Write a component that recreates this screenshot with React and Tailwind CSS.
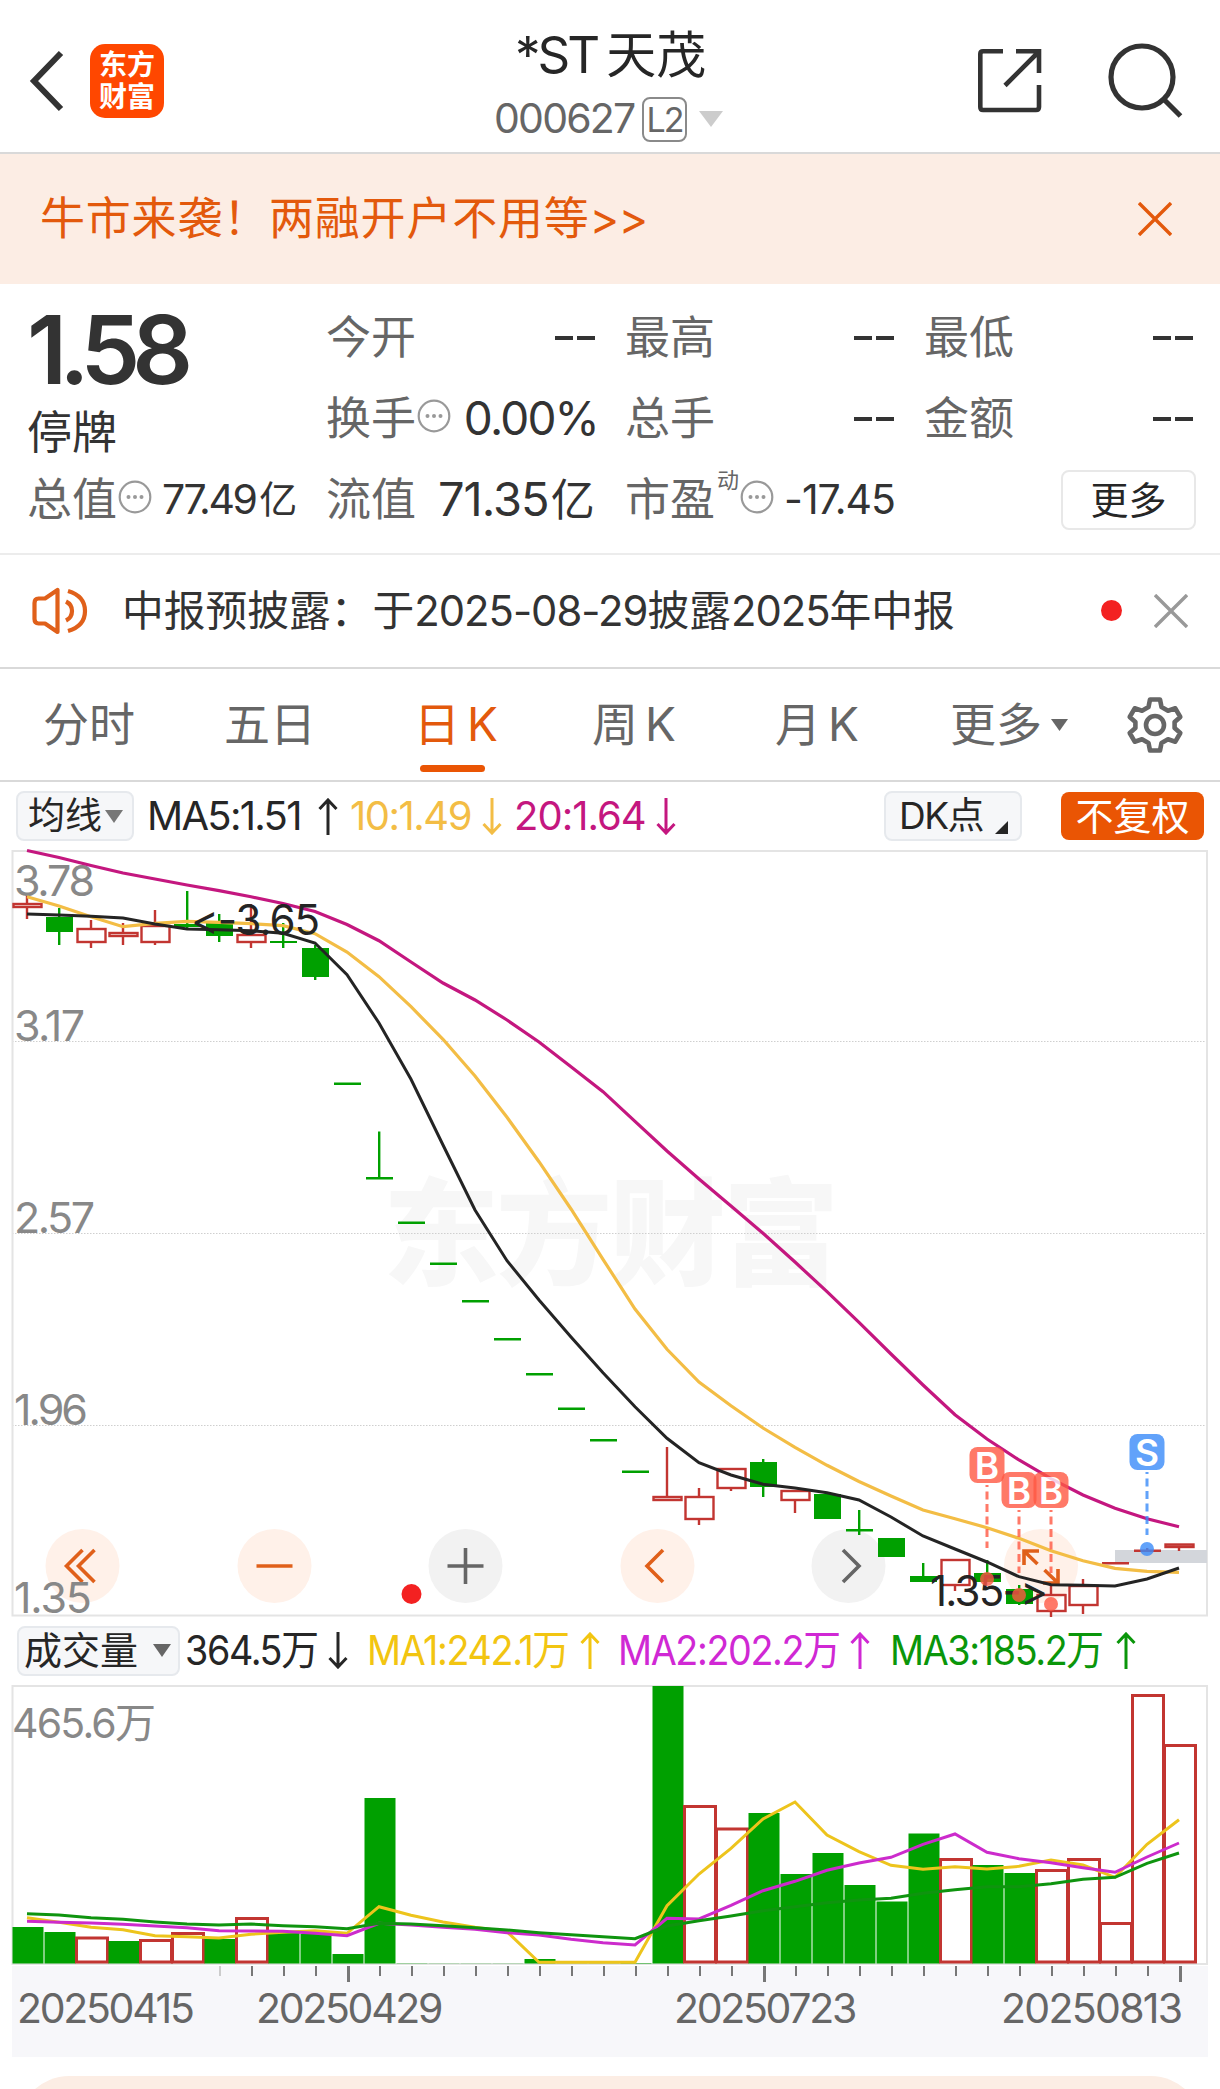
import { clsx } from "clsx";

/* ------------------ Data ------------------ */

const UP = "#c23531";
const DOWN = "#00a000";

// [body top, body bottom, wick top, wick bottom, direction]
const candles = [
  [904, 907, 896, 919, "up"],
  [917, 932, 908, 945, "down"],
  [929, 942, 920, 948, "up"],
  [933, 936, 923, 945, "up"],
  [926, 942, 910, 945, "up"],
  [924, 927, 891, 930, "down"],
  [923, 936, 914, 942, "down"],
  [935, 942, 904, 948, "up"],
  [941, 943, 923, 948, "down"],
  [948, 977, 945, 980, "down"],
  [1082.5, 1085, 1083, 1084, "down"],
  [1177, 1179.5, 1131.5, 1178, "down"],
  [1221.5, 1224, 1222, 1223, "down"],
  [1262.5, 1265, 1263, 1264, "down"],
  [1300, 1302.5, 1301, 1302, "down"],
  [1338, 1340.5, 1339, 1340, "down"],
  [1373, 1375.5, 1374, 1375, "down"],
  [1407.5, 1410, 1408, 1409, "down"],
  [1439, 1441.5, 1440, 1441, "down"],
  [1470.5, 1473, 1471, 1472, "down"],
  [1497, 1500, 1447, 1500, "up"],
  [1497, 1519, 1488, 1525, "up"],
  [1469, 1488, 1468, 1491, "up"],
  [1462, 1487, 1459, 1497, "down"],
  [1491, 1500, 1491, 1513, "up"],
  [1494, 1519, 1494, 1519, "down"],
  [1529, 1531.5, 1510, 1535, "down"],
  [1538, 1557, 1538, 1557, "down"],
  [1576, 1582, 1563, 1582, "down"],
  [1560, 1585, 1560, 1591, "up"],
  [1573, 1582, 1560, 1582, "down"],
  [1589, 1604, 1585, 1605, "down"],
  [1595, 1611, 1585, 1617, "up"],
  [1586, 1605, 1579, 1614, "up"],
  [1562, 1564.5, 1563, 1564, "flat"],
  [1549.5, 1552, 1548, 1552, "flat"],
  [1544.5, 1547, 1544, 1551, "up"],
];

const priceLines = [
  {
    color: "#c4177f",
    width: 3.2,
    points: [
      850.5, 857.5, 865.5, 873, 879, 885, 890.7, 896.7, 903.5, 911.5, 924.5,
      940.7, 962, 983, 1000, 1020, 1042, 1066.7, 1091.7, 1121.3, 1151, 1179,
      1206, 1233.3, 1262, 1291.7, 1322.3, 1354, 1385, 1414.7, 1439, 1460,
      1478.7, 1495, 1508.3, 1518.7, 1526.7,
    ],
  },
  {
    color: "#f3bd45",
    width: 3.2,
    points: [
      896.7, 906, 916.7, 926.7, 923.3, 921.3, 922.3, 923.7, 925.7, 933.7, 952,
      976.7, 1006.7, 1039.3, 1076, 1117.3, 1161.7, 1209, 1259.3, 1309, 1349.3,
      1382, 1405.7, 1428, 1447.3, 1465.3, 1481.5, 1496, 1510, 1518.7, 1527.7,
      1538.3, 1550.7, 1560.7, 1568.3, 1571.3, 1572.3,
    ],
  },
  {
    color: "#242424",
    width: 3,
    points: [
      914, 915, 916.3, 918, 924, 929, 929.7, 930.7, 933.3, 943, 974.7, 1023,
      1079.3, 1145, 1210, 1260.7, 1300, 1337, 1372.7, 1406.7, 1438.3, 1462.7,
      1475, 1484.3, 1488, 1492.7, 1500, 1517, 1536, 1549, 1562, 1576.7, 1584.7,
      1585.3, 1586, 1579, 1568,
    ],
  },
];

// [top of the bar, filled]
const volumes = [
  [1927, 1], [1932, 1], [1938, 0], [1941, 1], [1940.5, 0], [1933.5, 0],
  [1939, 1], [1918.5, 0], [1933, 1], [1934, 1], [1954, 1], [1798, 1],
  [1963.2, 1], [1963.3, 1], [1963.3, 1], [1963.3, 1], [1959, 1], [1963.3, 1],
  [1963.3, 1], [1963, 1], [1686, 1], [1806.5, 0], [1829, 0], [1813, 1],
  [1874, 1], [1853, 1], [1885, 1], [1901.5, 1], [1833.5, 1], [1859.5, 0],
  [1865, 1], [1873, 1], [1870.5, 0], [1859.5, 0], [1923.5, 0], [1695.5, 0],
  [1745.5, 0],
];

const volumeLines = [
  {
    color: "#edc41c",
    points: [
      1917.7, 1922.3, 1927.3, 1929.7, 1935.7, 1936.7, 1938, 1934.3, 1932.3,
      1930.7, 1933.3, 1906.7, 1915.3, 1922, 1927.3, 1931.7, 1962.3, 1962.3,
      1962.3, 1962.3, 1905.7, 1874, 1848.3, 1819, 1802, 1835, 1851.7, 1865.3,
      1869.3, 1866.7, 1869, 1866.3, 1860, 1865, 1877.3, 1844.3, 1819.7,
    ],
  },
  {
    color: "#cc2bcc",
    points: [
      1921.3, 1922.3, 1923, 1924.3, 1926, 1927.7, 1930.7, 1931, 1931.3, 1933.3,
      1935.7, 1923.3, 1925, 1927.3, 1929.3, 1932.7, 1935, 1939.3, 1942.7, 1945,
      1918.3, 1919, 1905.3, 1890.7, 1881.3, 1870.3, 1863, 1857.3, 1844.3, 1834,
      1852.3, 1858.7, 1862.7, 1867.7, 1872.3, 1857, 1843,
    ],
  },
  {
    color: "#0f940f",
    points: [
      1913.7, 1915, 1917.7, 1919.3, 1922, 1924, 1925, 1924, 1925.7, 1926.7,
      1928.7, 1923.3, 1924, 1925.7, 1927.7, 1930, 1932.7, 1934.7, 1936.7,
      1938.7, 1926, 1920.7, 1916, 1910.7, 1906.7, 1902.7, 1900, 1898.3, 1893.3,
      1889.7, 1886.7, 1886.7, 1883.7, 1879.3, 1877.3, 1863.3, 1853,
    ],
  },
];

const priceLabels = [
  { text: "3.78", y: 896, length: 81 },
  { text: "3.17", y: 1041, length: 71 },
  { text: "2.57", y: 1233, length: 81 },
  { text: "1.96", y: 1425, length: 74 },
  { text: "1.35", y: 1613, length: 78 },
];

const tradeMarks = [
  { type: "B", x: 987, y: 1447, dot: 1579 },
  { type: "B", x: 1019, y: 1472, dot: 1595 },
  { type: "B", x: 1051, y: 1472, dot: 1604 },
  { type: "S", x: 1147, y: 1434, dot: 1549 },
];

const tabs = [
  { label: "分时", className: "w-[181px]" },
  { label: "五日", className: "w-[190px]" },
  { label: "日", suffix: "K", className: "w-[178px]", active: true },
  { label: "周", suffix: "K", className: "w-[183px]" },
  { label: "月", suffix: "K", className: "w-[175px]" },
];

const slotX = (i) => 27 + 32 * i;
const toPoints = (values) => values.map((y, i) => `${slotX(i)},${y}`).join(" ");

/* ------------------ Icons ------------------ */

const Caret = ({ className, width = 18, height = 13 }) => (
  <svg
    className={clsx("shrink-0", className)}
    width={width}
    height={height}
    viewBox="0 0 18 13"
    preserveAspectRatio="none"
  >
    <path d="M0 0H18L9 13Z" fill="currentColor" />
  </svg>
);

const Close = ({ className }) => (
  <svg className={className} width="34" height="34" viewBox="0 0 34 34">
    <path d="M1 1L33 33M33 1L1 33" stroke="currentColor" strokeWidth="3.4" />
  </svg>
);

const MoreDots = ({ className }) => (
  <svg
    className={clsx("-mt-[5px] shrink-0 text-[#999]", className)}
    width="34"
    height="34"
    viewBox="0 0 34 34"
  >
    <circle cx="17" cy="17" r="15.3" fill="none" stroke="currentColor" strokeWidth="2.2" />
    <circle cx="10.5" cy="17" r="2" fill="currentColor" />
    <circle cx="17" cy="17" r="2" fill="currentColor" />
    <circle cx="23.5" cy="17" r="2" fill="currentColor" />
  </svg>
);

const Trend = ({ down, className }) => (
  <svg
    className={clsx("shrink-0", className)}
    width="20"
    height="37"
    viewBox="0 0 20 37"
    fill="none"
    stroke="currentColor"
    strokeWidth="3"
  >
    {down ? <path d="M10 0V35M1.5 26L10 35L18.5 26" /> : <path d="M10 37V2M1.5 11L10 2L18.5 11" />}
  </svg>
);

const Gear = () => (
  <svg width="58" height="58" viewBox="0 0 58 58" fill="none" stroke="#666" strokeWidth="4.6">
    <path d="M24 3.5H34L35.5 11L42 14.7L49.3 12.3L54.3 21L48.6 26V32L54.3 37L49.3 45.7L42 43.3L35.5 47L34 54.5H24L22.5 47L16 43.3L8.7 45.7L3.7 37L9.4 32V26L3.7 21L8.7 12.3L16 14.7L22.5 11Z" strokeLinejoin="round" />
    <circle cx="29" cy="29" r="9" />
  </svg>
);

const Speaker = () => (
  <svg width="56" height="48" viewBox="0 0 56 48" fill="none" stroke="#e0601a" strokeWidth="4.2">
    <path d="M13 11.5L25.5 3V45L13 36.5H6.5Q2.5 36.5 2.5 32V16Q2.5 11.5 6.5 11.5Z" strokeLinejoin="round" />
    <path d="M34 14.5Q40 17.5 40 24T34 33.5" />
    <path d="M36 4Q53 9 53 24T36 44" />
  </svg>
);

/* ------------------ Sections ------------------ */

const Header = () => (
  <header className="flex h-[154px] items-start border-b-2 border-[#d9d9d9]">
    <svg className="ml-7 mt-[50px]" width="38" height="62" viewBox="0 0 38 62">
      <path d="M33 3L6 31L33 59" fill="none" stroke="#333" strokeWidth="6" />
    </svg>
    <div className="ml-[24px] mt-[44px] flex h-[74px] w-[74px] flex-col items-center justify-center rounded-[15px] bg-[#ff4700] text-[28px] leading-[32px] font-bold text-white">
      <span>东方</span>
      <span>财富</span>
    </div>
    <div className="ml-[330px] flex w-[270px] flex-col">
      <div className="ml-[21px] mt-[19px] flex h-[72px] items-center text-[50px] text-[#262626]">
        <span className="text-[51px] tracking-[-3px]">*ST</span>
        <span className="ml-[9px]">天茂</span>
      </div>
      <div className="mt-[5px] flex h-[46px] items-center text-[#666]">
        <span className="w-[148px] text-[41px] tracking-[-1.8px]">000627</span>
        <span className="flex h-[45px] w-[45px] items-center justify-center rounded-lg border-2 border-[#8a8a8a] text-[34px] tracking-[-2px]">
          L2
        </span>
        <Caret className="ml-[12px] text-[#ccc]" width={24} height={16} />
      </div>
    </div>
    <svg className="ml-[213px] mt-[48px]" width="65" height="66" viewBox="0 0 65 66" fill="none" stroke="#333" strokeWidth="4.6">
      <path d="M26 3.3H6Q3.3 3.3 3.3 6V59Q3.3 62 6 62H59Q62 62 62 59V37" />
      <path d="M39 3.3H62V25M61 4.5L28 37.5" />
    </svg>
    <svg className="ml-[65px] mt-[42px]" width="76" height="76" viewBox="0 0 76 76" fill="none" stroke="#333" strokeWidth="5.2">
      <circle cx="35" cy="35" r="31" />
      <path d="M57.5 58L73.5 74" />
    </svg>
  </header>
);

const PromoBanner = () => (
  <section className="flex h-[130px] items-center justify-between bg-[#fcede4] pr-[48px] pl-[40px] text-[#e3590c]">
    <p className="text-[45px] tracking-[0.8px]">
      牛市来袭！两融开户不用等<span className="tracking-[-1px]">&gt;&gt;</span>
    </p>
    <Close />
  </section>
);

const Stat = ({ label, children, className }) => (
  <div className={clsx("flex h-[81px] items-center text-[45px] text-[#666]", className)}>
    <span className="shrink-0">{label}</span>
    {children}
  </div>
);

const Empty = () => (
  <span className="ml-auto flex gap-1">
    <i className="h-1 w-[18px] bg-[#333]" />
    <i className="h-1 w-[18px] bg-[#333]" />
  </span>
);

const Quote = () => (
  <section className="h-[271px] border-b-2 border-[#ececec] pt-[13px] pl-[27px]">
    <div className="flex h-[162px]">
      <div className="w-[299px] text-[#333]">
        <p className="mt-[1px] h-[102px] text-[95px] leading-[104px] font-semibold tracking-[-8px]">1.58</p>
        <p className="text-[45px] leading-[66px]">停牌</p>
      </div>
      <div className="grid grid-cols-[269px_269px_269px] gap-x-[30px]">
        <Stat label="今开"><Empty /></Stat>
        <Stat label="最高"><Empty /></Stat>
        <Stat label="最低"><Empty /></Stat>
        <Stat label="换手">
          <MoreDots className="ml-px" />
          <span className="mr-[-3px] ml-auto text-[46px] tracking-[-1.8px] text-[#333]">0.00%</span>
        </Stat>
        <Stat label="总手"><Empty /></Stat>
        <Stat label="金额"><Empty /></Stat>
      </div>
    </div>
    <div className="flex h-[81px] items-center">
      <Stat label="总值" className="w-[299px]">
        <MoreDots className="ml-px" />
        <span className="ml-[10px] flex items-center text-[#333]">
          <span className="text-[41px] tracking-[-2.5px]">77.49</span>
          <span className="ml-[4px] text-[38px]">亿</span>
        </span>
      </Stat>
      <Stat label="流值" className="w-[299px]">
        <span className="ml-[22px] flex items-center text-[#333]">
          <span className="text-[47px] tracking-[-1px]">71.35</span>
          <span className="ml-[2px] text-[44px]">亿</span>
        </span>
      </Stat>
      <Stat label="市盈" className="w-[436px]">
        <sup className="-top-[20px] ml-[2px] text-[22px] leading-none">动</sup>
        <MoreDots className="ml-px" />
        <span className="ml-[10px] text-[41px] tracking-[-1px] text-[#333]">-17.45</span>
      </Stat>
      <button className="h-[60px] w-[135px] rounded-lg border-2 border-[#e8e8e8] text-[38px] leading-[54px] text-[#262626]">
        更多
      </button>
    </div>
  </section>
);

const Notice = () => (
  <section className="flex h-[114px] items-center border-b-2 border-[#d9d9d9] pl-[32px]">
    <Speaker />
    <p className="ml-[34px] w-[979px] text-[41.75px] whitespace-nowrap text-[#333]">
      中报预披露：于<span className="tracking-[-1px]">2025-08-29</span>披露
      <span className="tracking-[-1px]">2025</span>年中报
    </p>
    <i className="mt-[-1px] size-[21px] rounded-full bg-[#f32121]" />
    <Close className="ml-[32px] text-[#999]" />
  </section>
);

const Tabs = () => (
  <nav className="flex h-[113px] items-center border-b-2 border-[#d9d9d9] pl-[43px] text-[46px] text-[#666]">
    {tabs.map((tab) => (
      <button
        key={tab.label}
        className={clsx("relative h-full text-left", tab.className, tab.active && "text-[#e3590c]")}
      >
        {tab.label}
        {tab.suffix && <span className="ml-[7px]">{tab.suffix}</span>}
        {tab.active && <i className="absolute bottom-[8px] left-[6px] h-[7px] w-[65px] rounded-full bg-[#ea5504]" />}
      </button>
    ))}
    <button className="flex w-[176px] items-center">
      更多
      <Caret className="ml-[9px]" width={17} height={12} />
    </button>
    <Gear />
  </nav>
);

const Chip = ({ children, className }) => (
  <button
    className={clsx(
      "flex shrink-0 items-center rounded-lg border-2 border-[#e6e9ed] bg-[#f6f7f9] text-[37px] text-[#262626]",
      className,
    )}
  >
    {children}
  </button>
);

const AverageBar = () => (
  <section className="flex h-[68px] items-center pl-[16px] text-[40px]">
    <Chip className="h-[50px] w-[118px] pl-[10px]">
      均线
      <Caret className="ml-[3px] text-[#777]" />
    </Chip>
    <div className="flex w-[750px] items-center whitespace-nowrap">
      <span className="ml-[13px] w-[171px] tracking-[-1.7px] text-[#262626]">MA5:1.51</span>
      <Trend className="text-[#262626]" />
      <span className="ml-[12px] w-[132px] tracking-[-1.5px] text-[#f3bd45]">10:1.49</span>
      <Trend down className="text-[#f3bd45]" />
      <span className="ml-[12px] w-[142px] tracking-[-1px] text-[#c4177f]">20:1.64</span>
      <Trend down className="text-[#c4177f]" />
    </div>
    <Chip className="h-[50px] w-[138px] pl-[13px]">
      <span className="tracking-[-1.5px]">DK点</span>
      <svg className="mt-[22px] ml-[12px]" width="13" height="13" viewBox="0 0 13 13">
        <path d="M13 0V13H0Z" fill="#262626" />
      </svg>
    </Chip>
    <button className="ml-[39px] h-[48px] w-[143px] rounded-lg bg-[#ea5504] text-[38px] leading-[48px] text-white">
      不复权
    </button>
  </section>
);

const Candle = ({ i, data }) => {
  const [top, bottom, high, low, dir] = data;
  const x = slotX(i);
  if (dir === "up") {
    return (
      <g stroke={UP} strokeWidth="2.4" fill="none">
        <path d={`M${x} ${high}V${Math.max(top, high)}M${x} ${bottom}V${low}`} />
        <rect x={x - 13.5} y={top} width="28" height={bottom - top} />
      </g>
    );
  }
  const color = dir === "flat" ? UP : DOWN;
  return (
    <g fill={color}>
      <rect x={x - 1} y={high} width="2.4" height={low - high} />
      <rect x={x - 13} y={top} width="27" height={bottom - top} />
    </g>
  );
};

const RoundButton = ({ cx, gray, children }) => (
  <g fill="none" stroke={gray ? "#666" : "#e0601a"} strokeWidth="3.6">
    <circle cx={cx} cy="1566" r="37" fill={gray ? "#f2f2f2" : "#fff1e9"} stroke="none" />
    <g transform={`translate(${cx} 1566)`}>{children}</g>
  </g>
);

const TradeMark = ({ type, x, y, dot }) => {
  const color = type === "B" ? "#ff5843" : "#3a8bfa";
  return (
    <g opacity="0.8">
      <rect x={x - 17.5} y={y} width="35" height="36" rx="8" fill={color} />
      <text x={x} y={y + 31.5} textAnchor="middle" fontSize="37" fontWeight="600" fill="#fff">
        {type}
      </text>
      <path d={`M${x} ${y + 38}V${y + 101}`} stroke={color} strokeWidth="3" strokeDasharray="8 4.5" strokeDashoffset="6" />
      <circle cx={x} cy={dot} r="7" fill={color} />
    </g>
  );
};

const PriceChart = () => (
  <svg className="block" width="1220" height="766" viewBox="0 850 1220 766" overflow="visible">
    <text x="383" y="1276" fontSize="116" fontWeight="900" fill="#f7f7f7" textLength="456">
      东方财富
    </text>
    <path d="M12 1041.5H1207M12 1233.5H1207M12 1425.5H1207" stroke="#cfcfcf" strokeDasharray="1.5 1.5" />
    <rect x="12.5" y="851" width="1194.5" height="764.5" fill="none" stroke="#e4e4e4" strokeWidth="2" />
    <RoundButton cx={82.5}>
      <path d="M0 -16L-16 0L0 16M12 -16L-4 0L12 16" />
    </RoundButton>
    <RoundButton cx={274.5}>
      <path d="M-18 0H18" />
    </RoundButton>
    <RoundButton cx={465.5} gray>
      <path d="M-18 0H18M0 -18V18" />
    </RoundButton>
    <RoundButton cx={657.5}>
      <path d="M5.5 -16L-10.5 0L5.5 16" />
    </RoundButton>
    <RoundButton cx={848.5} gray>
      <path d="M-5.5 -16L10.5 0L-5.5 16" />
    </RoundButton>
    <RoundButton cx={1041}>
      <path d="M-17 -1V-15H-2M-17 -15L-3.5 -2M2 17H17V3M17 17L3.5 4" />
    </RoundButton>
    <circle cx="411.5" cy="1594" r="10" fill="#f32121" />
    {priceLabels.map((label) => (
      <text key={label.text} x="14" y={label.y} fontSize="43" fill="#888" textLength={label.length}>
        {label.text}
      </text>
    ))}
    <rect x="1115" y="1550" width="92" height="13" fill="#d3d6db" />
    {candles.map((data, i) => (
      <Candle key={i} i={i} data={data} />
    ))}
    {priceLines.map((line) => (
      <polyline
        key={line.color}
        points={toPoints(line.points)}
        fill="none"
        stroke={line.color}
        strokeWidth={line.width}
      />
    ))}
    <g fill="#242424" fontSize="42">
      <text x="191" y="935" textLength="129">&lt;-3.65</text>
      <text x="930" y="1606" textLength="118">1.35-&gt;</text>
    </g>
    {tradeMarks.map((mark) => (
      <TradeMark key={mark.x} {...mark} />
    ))}
  </svg>
);

const VolumeValue = ({ children, className }) => (
  <span className={clsx("origin-left scale-x-92 tracking-[-1.5px]", className)}>{children}</span>
);

const VolumeBar = () => (
  <section className="flex h-[69px] items-center pl-[17px] text-[41px] whitespace-nowrap">
    <Chip className="h-[50px] w-[163px] pl-[5px]">
      <span className="text-[38px]">成交量</span>
      <Caret className="ml-[15px] text-[#666]" />
    </Chip>
    <VolumeValue className="ml-[5px] w-[143px] text-[#262626]">364.5万</VolumeValue>
    <Trend down className="text-[#262626]" />
    <VolumeValue className="ml-[19px] w-[213px] text-[#f2c511]">MA1:242.1万</VolumeValue>
    <Trend className="text-[#f2c511]" />
    <VolumeValue className="ml-[18px] w-[232px] text-[#d028d4]">MA2:202.2万</VolumeValue>
    <Trend className="text-[#d028d4]" />
    <VolumeValue className="ml-[20px] w-[226px] text-[#0a960a]">MA3:185.2万</VolumeValue>
    <Trend className="text-[#0a960a]" />
  </section>
);

const VolumeChart = () => (
  <svg className="block" width="1220" height="281" viewBox="0 1685 1220 281">
    <rect x="12.5" y="1686" width="1194.5" height="278" fill="none" stroke="#e4e4e4" strokeWidth="2" />
    <text x="12" y="1738" fontSize="41" fill="#888" textLength="144">465.6万</text>
    {volumes.map(([top, filled], i) =>
      filled ? (
        <rect key={i} x={slotX(i) - 14.5} y={top} width="31" height={1963.5 - top} fill={DOWN} />
      ) : (
        <rect key={i} x={slotX(i) - 14.5} y={top} width="31" height={1962 - top} fill="#fff" stroke={UP} strokeWidth="3" />
      ),
    )}
    {volumeLines.map((line) => (
      <polyline key={line.color} points={toPoints(line.points)} fill="none" stroke={line.color} strokeWidth="3" />
    ))}
  </svg>
);

const DateAxis = () => (
  <section className="mx-3 h-[91px] bg-[#f7f7fa] text-[41px] text-[#666]">
    <svg className="block" width="1196" height="17" viewBox="12 0 1196 17">
      {volumes.map((_, i) => {
        if (i < 6) return null;
        const major = i === 10 || i === 23 || i === 36;
        return (
          <rect
            key={i}
            x={slotX(i)}
            width={major ? 3 : 2}
            height={major ? 16 : 10}
            fill={i === 6 ? "#ccc" : "#777"}
          />
        );
      })}
    </svg>
    <div className="flex h-[52px] items-center tracking-[-2.3px]">
      <span className="ml-[5px] w-[239px]">20250415</span>
      <span className="w-[418px]">20250429</span>
      <span className="w-[327px]">20250723</span>
      <span className="tracking-[-1.7px]">20250813</span>
    </div>
  </section>
);

/* ------------------ Page ------------------ */

export default function App() {
  return (
    <main className="h-[2089px] w-[1220px] overflow-hidden bg-white font-['Inter','Noto_Sans_CJK_SC',sans-serif] leading-normal [font-feature-settings:'calt'_0]">
      <Header />
      <PromoBanner />
      <Quote />
      <Notice />
      <Tabs />
      <AverageBar />
      <PriceChart />
      <VolumeBar />
      <VolumeChart />
      <DateAxis />
      <div className="mx-[18px] mt-[19px] h-24 rounded-t-[51px] bg-[#fcede4]" />
    </main>
  );
}
